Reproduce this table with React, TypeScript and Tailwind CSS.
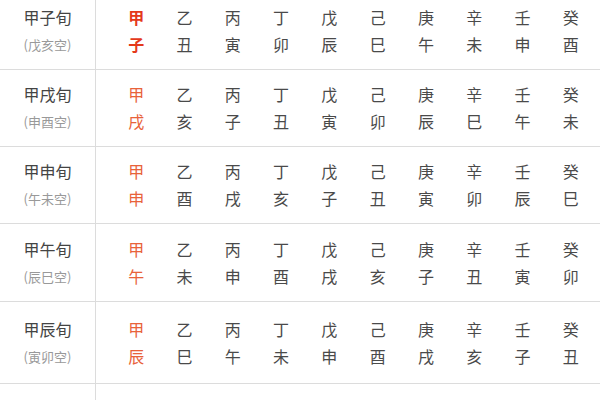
const stems = ["甲", "乙", "丙", "丁", "戊", "己", "庚", "辛", "壬", "癸"]

const xun = [
  { name: "甲子旬", kong: "(戊亥空)", branches: ["子", "丑", "寅", "卯", "辰", "巳", "午", "未", "申", "酉"], strong: true, h: "h-[78px]" },
  { name: "甲戌旬", kong: "(申酉空)", branches: ["戌", "亥", "子", "丑", "寅", "卯", "辰", "巳", "午", "未"], h: "h-[77px]" },
  { name: "甲申旬", kong: "(午未空)", branches: ["申", "酉", "戌", "亥", "子", "丑", "寅", "卯", "辰", "巳"], h: "h-[77px]" },
  { name: "甲午旬", kong: "(辰巳空)", branches: ["午", "未", "申", "酉", "戌", "亥", "子", "丑", "寅", "卯"], h: "h-[78px]" },
  { name: "甲辰旬", kong: "(寅卯空)", branches: ["辰", "巳", "午", "未", "申", "酉", "戌", "亥", "子", "丑"], h: "h-[82px]" },
  { name: "甲寅旬", kong: "(子丑空)", branches: ["寅", "卯", "辰", "巳", "午", "未", "申", "酉", "戌", "亥"], h: "h-[78px]" },
]

export default function App() {
  return (
    <div
      className="w-[600px] h-[400px] overflow-hidden bg-white"
      style={{ fontFamily: '"Noto Sans CJK SC", "Noto Sans", sans-serif' }}
    >
      <div className="-mt-[8px]">
        {xun.map((row) => {
          const first = row.strong ? "text-[#e4391b] font-bold" : "text-[#e8623a]"
          return (
            <div key={row.name} className={`flex border-b border-[#dcdcdc] ${row.h}`}>
              <div className="w-[96px] shrink-0 border-r border-[#dcdcdc] flex flex-col items-center justify-center">
                <div className="text-[16px] leading-[27px] text-[#444]">{row.name}</div>
                <div className="text-[13px] leading-[27px] text-[#999]">{row.kong}</div>
              </div>
              <div className="flex pl-[16px] items-center">
                {stems.map((s, i) => (
                  <div key={s} className="w-[48.3px] flex flex-col items-center text-[16px] leading-[27px]">
                    <span className={i === 0 ? first : "text-[#4a4a4a]"}>{s}</span>
                    <span className={i === 0 ? first : "text-[#4a4a4a]"}>{row.branches[i]}</span>
                  </div>
                ))}
              </div>
            </div>
          )
        })}
      </div>
    </div>
  )
}
